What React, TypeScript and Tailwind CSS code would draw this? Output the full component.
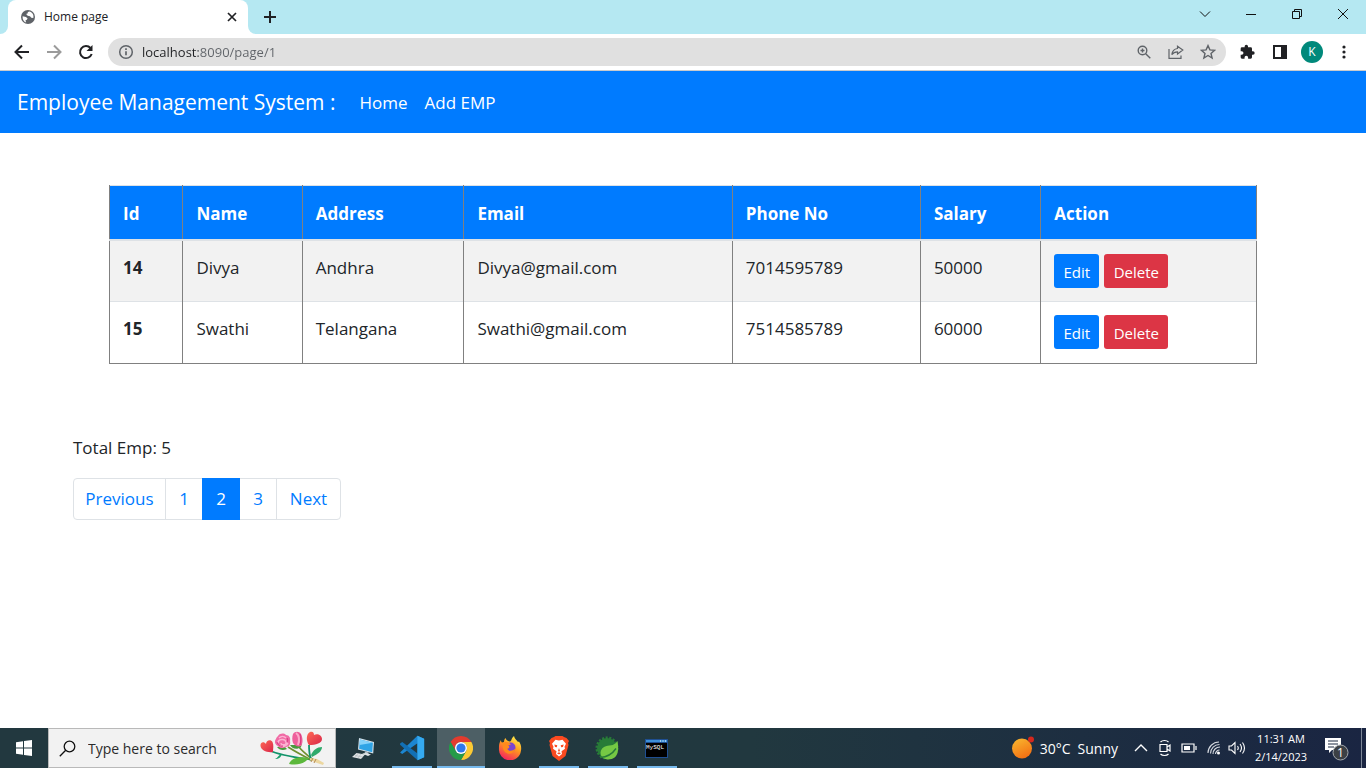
import React, { useState } from "react";

const FONT = "font-['Open_Sans','Noto_Sans',sans-serif]";

const employees = [
  { id: 14, name: "Divya", address: "Andhra", email: "Divya@gmail.com", phone: "7014595789", salary: "50000" },
  { id: 15, name: "Swathi", address: "Telangana", email: "Swathi@gmail.com", phone: "7514585789", salary: "60000" },
];

const columns = [
  { label: "Id", width: "w-[6.4%]" },
  { label: "Name", width: "w-[10.4%]" },
  { label: "Address", width: "w-[14.1%]" },
  { label: "Email", width: "w-[23.4%]" },
  { label: "Phone No", width: "w-[16.4%]" },
  { label: "Salary", width: "w-[10.5%]" },
  { label: "Action", width: "w-[18.8%]" },
];

function IconButton({ label, className = "", children }: { label: string; className?: string; children: React.ReactNode }) {
  return (
    <button type="button" aria-label={label} className={`flex shrink-0 items-center justify-center ${className}`}>
      {children}
    </button>
  );
}

function GlobeIcon() {
  return (
    <svg width="16" height="16" viewBox="0 0 16 16">
      <circle cx="8" cy="8" r="7" fill="#5f6368" />
      <path d="M2.6 7.2 6 8l1.6 1.4-.8 1.4-1.3.5.6 2.2C3.8 12.8 2.3 10.5 2.6 7.2Z" fill="#fff" />
      <path d="M7.5 3.2 9.2 2.5c1.600.3 2.600 1 3.500 2.300.8 1.300.9 2.900.6 4.100l-2-.2-1.300-1.500-2.200-.4-1.300-1 .2-1.300 1.500-.2Z" fill="#fff" />
    </svg>
  );
}

function TabStrip() {
  return (
    <div className="flex h-[34px] items-stretch justify-between bg-[#b5e8f2]">
      <div className="flex items-stretch">
        <div className="flex w-2 bg-white">
          <div className="flex-1 rounded-br-lg bg-[#b5e8f2]" />
        </div>
        <div className="flex bg-[#b5e8f2]">
          <div className="flex w-[240px] items-center rounded-t-lg bg-white pr-2 pl-3">
            <GlobeIcon />
            <span className="ml-2 flex-1 text-[12px] text-[#202124]">Home page</span>
            <IconButton label="Close tab" className="size-4">
              <svg width="10" height="10" viewBox="0 0 10 10" stroke="#202124" strokeWidth="1.7">
                <path d="m1 1 8 8M9 1 1 9" />
              </svg>
            </IconButton>
          </div>
        </div>
        <div className="flex w-2 bg-white">
          <div className="flex-1 rounded-bl-lg bg-[#b5e8f2]" />
        </div>
        <IconButton label="New tab" className="w-7">
          <svg width="12" height="12" viewBox="0 0 12 12" stroke="#202124" strokeWidth="2">
            <path d="M6 0v12M0 6h12" />
          </svg>
        </IconButton>
      </div>
      <div className="flex h-7 text-[#111]">
        <IconButton label="Search tabs" className="w-[46px]">
          <svg width="12" height="12" viewBox="0 0 12 12" fill="none" stroke="currentColor">
            <path d="m1 3.500 5 5 5-5" />
          </svg>
        </IconButton>
        <IconButton label="Minimize" className="w-[46px]">
          <svg width="12" height="12" viewBox="0 0 12 12" fill="none" stroke="currentColor">
            <path d="M1 6.500h10" />
          </svg>
        </IconButton>
        <IconButton label="Restore" className="w-[46px]">
          <svg width="12" height="12" viewBox="0 0 12 12" fill="none" stroke="currentColor">
            <path d="M1.500 3.500h7v7h-7zM3.500 3.500v-2h7v7h-2" />
          </svg>
        </IconButton>
        <IconButton label="Close" className="w-[46px]">
          <svg width="12" height="12" viewBox="0 0 12 12" fill="none" stroke="currentColor">
            <path d="m1 1 10 10M11 1 1 11" />
          </svg>
        </IconButton>
      </div>
    </div>
  );
}

function Toolbar() {
  return (
    <div className="flex h-[37px] items-center border-b border-[#c9cbce] bg-white px-1.5">
      <IconButton label="Back" className="size-8">
        <svg width="16" height="16" viewBox="0 0 16 16" fill="none" stroke="#202124" strokeWidth="2">
          <path d="M15 8H2M8 1.500 1.500 8 8 14.500" />
        </svg>
      </IconButton>
      <IconButton label="Forward" className="size-8">
        <svg width="16" height="16" viewBox="0 0 16 16" fill="none" stroke="#9b9b9b" strokeWidth="2">
          <path d="M1 8h13M8 1.500 14.500 8 8 14.500" />
        </svg>
      </IconButton>
      <IconButton label="Reload" className="size-8">
        <svg width="16" height="16" viewBox="0 0 16 16" fill="none" stroke="#202124" strokeWidth="2">
          <path d="M13.700 10A6 6 0 1 1 12.500 4" />
          <path d="M14.500 1v6h-6z" fill="#202124" stroke="none" />
        </svg>
      </IconButton>
      <div className="ml-1.5 flex h-7 flex-1 items-center rounded-full bg-[#e0e0e0] pr-[2px] pl-[10px]">
        <svg width="16" height="16" viewBox="0 0 16 16" fill="none" stroke="#5f6368" strokeWidth="1.500">
          <circle cx="8" cy="8" r="6.300" />
          <path d="M8 7.200v4M8 4.300v1.600" strokeWidth="1.700" />
        </svg>
        <input
          aria-label="Address bar"
          defaultValue="localhost:8090/page/1"
          className="ml-2 h-7 min-w-0 flex-1 bg-[linear-gradient(90deg,#202124_56px,#5f6368_56px)] bg-clip-text text-[13px] text-transparent outline-none"
        />
        <IconButton label="Zoom" className="size-8">
          <svg width="14" height="14" viewBox="0 0 14 14" fill="none" stroke="#5f6368" strokeWidth="1.400">
            <circle cx="5.500" cy="5.500" r="4.300" />
            <path d="m8.700 8.700 4.600 4.600M5.500 3.500v4M3.500 5.500h4" />
          </svg>
        </IconButton>
        <IconButton label="Share" className="size-8">
          <svg width="16" height="14" viewBox="0 0 16 14" fill="none" stroke="#5f6368" strokeWidth="1.200">
            <path d="M1 4v9.300h12V10.500" />
            <path d="M9.500 1.200 14.800 5 9.500 9V6.800C7 6.800 5.200 7.600 3.800 9.600 4.200 6.500 6 4 9.500 3.500Z" />
          </svg>
        </IconButton>
        <IconButton label="Bookmark" className="size-8">
          <svg width="16" height="16" viewBox="0 0 16 16" fill="none" stroke="#5f6368" strokeWidth="1.400">
            <path d="m8 1.600 1.900 4.300 4.700.4-3.600 3.100 1.100 4.600L8 11.500 3.900 14 5 9.400 1.400 6.300l4.700-.4Z" />
          </svg>
        </IconButton>
      </div>
      <IconButton label="Extensions" className="ml-1.5 size-8">
        <svg width="16" height="16" viewBox="1 0 24 24" fill="#202124">
          <path d="M20.500 11H19V7a2 2 0 0 0-2-2h-4V3.500a2.500 2.500 0 0 0-5 0V5H4a2 2 0 0 0-2 2v3.800h1.500a2.700 2.700 0 0 1 0 5.400H2V20a2 2 0 0 0 2 2h3.800v-1.500a2.700 2.700 0 0 1 5.400 0V22H17a2 2 0 0 0 2-2v-4h1.500a2.500 2.500 0 0 0 0-5Z" />
        </svg>
      </IconButton>
      <IconButton label="Side panel" className="size-8">
        <svg width="14" height="14" viewBox="0 0 14 14" fill="#202124">
          <path d="M0 0h14v14H0zM2 2v10h6V2z" fillRule="evenodd" />
        </svg>
      </IconButton>
      <IconButton label="Profile" className="size-8">
        <span className="flex size-[22px] items-center justify-center rounded-full bg-[#00897b] text-[12px] text-white">K</span>
      </IconButton>
      <IconButton label="Menu" className="size-8">
        <svg width="4" height="14" viewBox="0 0 4 14" fill="#202124">
          <circle cx="2" cy="2" r="1.600" />
          <circle cx="2" cy="7" r="1.600" />
          <circle cx="2" cy="12" r="1.600" />
        </svg>
      </IconButton>
    </div>
  );
}

function Navbar() {
  return (
    <nav className="flex h-[62px] items-center bg-[#007bff] px-[17px] pt-0.5 text-white">
      <a href="#home" className="text-[21px]">Employee Management System :</a>
      <div className="ml-6 flex gap-[17px] text-[17px]">
        <a href="#home">Home</a>
        <a href="#add">Add EMP</a>
      </div>
    </nav>
  );
}

function EmployeeTable() {
  const cell = "border-x border-x-[#808080] px-[13px] pt-[14px]";
  return (
    <table className="w-full table-fixed border-collapse border border-[#808080] text-left text-[17px] leading-[26px]">
      <thead>
        <tr className="h-[54px] border-t border-b-2 border-[#dee2e6] bg-[#007bff] text-white">
          {columns.map((c) => (
            <th key={c.label} scope="col" className={`border-x border-x-[#808080] px-[13px] pt-1 font-bold ${c.width}`}>
              {c.label}
            </th>
          ))}
        </tr>
      </thead>
      <tbody className="align-top">
        {employees.map((e) => (
          <tr key={e.id} className="h-[62px] border-b border-b-[#dee2e6] odd:bg-[#f2f2f2] last:border-b-[#808080]">
            <th scope="row" className={`${cell} font-bold`}>{e.id}</th>
            <td className={cell}>{e.name}</td>
            <td className={cell}>{e.address}</td>
            <td className={cell}>{e.email}</td>
            <td className={cell}>{e.phone}</td>
            <td className={cell}>{e.salary}</td>
            <td className="border-x border-x-[#808080] px-[13px] pt-[13px]">
              <div className="flex gap-[5px] text-[15px] text-white">
                <button type="button" className="flex h-[34px] w-[45px] items-center justify-center rounded-[3px] bg-[#007bff] pt-0.5">Edit</button>
                <button type="button" className="flex h-[34px] w-16 items-center justify-center rounded-[3px] bg-[#dc3545] pt-0.5">Delete</button>
              </div>
            </td>
          </tr>
        ))}
      </tbody>
    </table>
  );
}

function Pagination() {
  const [page, setPage] = useState(2);
  const item = "flex h-[42px] items-center justify-center border text-[17px]";
  const idle = "border-[#dee2e6] text-[#007bff]";
  return (
    <nav aria-label="Pages" className="flex">
      <a href="#previous" className={`${item} ${idle} w-[93px] rounded-l`}>Previous</a>
      {[1, 2, 3].map((n) => (
        <a
          key={n}
          href={`#${n}`}
          onClick={() => setPage(n)}
          className={`${item} -ml-px w-[38px] ${n === page ? "z-10 border-[#007bff] bg-[#007bff] text-white" : idle}`}
        >
          {n}
        </a>
      ))}
      <a href="#next" className={`${item} ${idle} -ml-px w-[65px] rounded-r`}>Next</a>
    </nav>
  );
}

function Bouquet() {
  return (
    <svg width="66" height="36" viewBox="0 0 66 36" fill="none">
      <defs>
        <linearGradient id="heart" x1="0" y1="0" x2="1" y2="1">
          <stop stopColor="#ff6a55" />
          <stop offset="1" stopColor="#d9264a" />
        </linearGradient>
      </defs>
      <path d="M12 21.500C24 26 38 28 54 30" stroke="#12936a" strokeWidth="1.800" />
      <path d="M28 17c6 4 14 8 23 13M39 17c3 4 8 8 13 12" stroke="#6f8f2f" strokeWidth="1.600" />
      <path d="M49 15c0 5 0 9 2 14" stroke="#12936a" strokeWidth="1.800" />
      <path d="M29 34c2-5 8-8 20-6-3 4-9 8-20 6Z" fill="#5cb83c" />
      <path d="M51 25c2-5 6-8 11-8 0 4-4 7-10 10Z" fill="#2faa6c" />
      <path d="M15 29c3-1 3-4 7-5-1 3-3 5-7 5Z" fill="#19a06c" />
      <path d="M17 17c2 3 6 4 10 2l-3-3ZM30 15c2 4 7 5 11 2l1-4-6 2Z" fill="#4a9a3e" />
      <path d="m50 28 7 1 7 4-1 2-6-2-7-3Z" fill="#ecd7a0" />
      <path d="m53 28-2 4M56 29l-2 4" stroke="#b48a50" />
      <path d="M18 6c2-3 6-3 8-1 3 0 5 3 4 6 1 3-1 6-4 6-3 2-7 1-8-1-3-1-4-5-2-7 0-1 1-2 2-3Z" fill="#f06ba5" />
      <path d="M19 8c2-2 5-2 7 0M18 13c0-4 7-5 8-1 1 3-5 4-5 1M20 16c3 1 6 0 8-3" stroke="#fcb3d2" strokeWidth="1.400" />
      <path d="M17 12c1 3 3 5 6 4M27 8c1 1 1 3 0 4" stroke="#d63a80" />
      <path d="M33 4c2-3 6-3 8 0 2 4 2 9 0 12-3 1-6 0-8-3-1-3-1-6 0-9Z" fill="#ee5f9b" />
      <path d="M36 3c3 2 4 7 2 12" stroke="#fca9ca" strokeWidth="2" />
      <path d="M40 4c1 3 1 7 0 11" stroke="#d73a7c" />
      <path d="M13 22C7 23 1 20 .5 16 0 12 4 11 6 14c0-4 5-5 6.500-2 1.500 3 .5 7 .5 10Z" fill="url(#heart)" />
      <path d="M49 15c-3-4-3-11 1-13 3-1 4 1 4 3 3-2 8 0 8 4 0 4-6 6-13 6Z" fill="url(#heart)" />
    </svg>
  );
}

function ComputerIcon() {
  return (
    <svg width="24" height="24" viewBox="0 0 24 24">
      <path d="m8 2 15 4-.8 11.500L7 13.500Z" fill="#d5e2ea" />
      <path d="m9 3.400 12.900 3.400-.7 9.400L8.100 12.800Z" fill="#2fa4e6" />
      <path d="m9 3.400 12.900 3.400L8.500 9Z" fill="#85d2fa" />
      <path d="m14 15.500 3.500 1v2l-4-1Z" fill="#b7c2c8" />
      <path d="m11 17.500 4-.5 5 1.500-3 1.500ZM5.500 17l8.500 1.500-4 4.500L1 21Z" fill="#dfe3e5" />
      <path d="m4 19.500 8 1.500M7 17.500 4 21.500M10 18l-3 4" stroke="#aeb6ba" strokeWidth=".6" />
    </svg>
  );
}

function CodeIcon() {
  return (
    <svg width="26" height="26" viewBox="0 0 24 24">
      <path d="M17 .8 23.200 3.500v17L17 23.200 17 7.500 3 17.500 1 16.200Z" fill="#1c86d1" />
      <path d="M1 7.800 3 6.500 17.200 17v6.200L1 9Z" fill="#1270b5" />
      <path d="M17 .8 23.200 3.500v17L17 23.200z" fill="#35aaf0" />
    </svg>
  );
}

function ChromeIcon() {
  return (
    <svg width="24" height="24" viewBox="0 0 24 24">
      <path d="M12 0a12 12 0 0 1 10.400 6H12a6 6 0 0 0-5.200 9L1.600 6A12 12 0 0 1 12 0Z" fill="#e33b2e" />
      <path d="M22.400 6a12 12 0 0 1-10.400 18l5.200-9A6 6 0 0 0 12 6Z" fill="#fcc934" />
      <path d="M12 24A12 12 0 0 1 1.600 6l5.200 9a6 6 0 0 0 10.400 0Z" fill="#249b48" />
      <circle cx="12" cy="12" r="6" fill="#fff" />
      <circle cx="12" cy="12" r="4.600" fill="#2f78ec" />
    </svg>
  );
}

function FirefoxIcon() {
  return (
    <svg width="24" height="24" viewBox="0 0 24 24">
      <defs>
        <linearGradient id="fire" x1=".8" y1="0" x2=".3" y2="1">
          <stop stopColor="#fff44f" />
          <stop offset=".45" stopColor="#ff9a1f" />
          <stop offset="1" stopColor="#f5205f" />
        </linearGradient>
      </defs>
      <path d="M3 4c0 1 .2 2 1 2.500L6 6c0-2 .5-3 1.500-4 .5 2 2 3 4 3.500 1 0 1.500-.5 2-2C14 2 15 1 16 0c.5 3 3 4 4 6l1-.5c2 3 2.500 5.500 2 9A11 11 0 0 1 1 12C.8 9 1.500 6 3 4Z" fill="url(#fire)" />
      <circle cx="12.500" cy="11.500" r="5" fill="#7a44cf" />
      <path d="M5 7c3-2 6-1 8 1.500l-3 1c2 .5 1.500 3-.5 3 0 3 5 3 8 0-1 4-4.500 6-8 5C5 16 4 11 5 7Z" fill="#ff8a1d" />
    </svg>
  );
}

function BraveIcon() {
  return (
    <svg width="22" height="25" viewBox="0 0 22 25">
      <path d="m6 1 1.500-1h7L16 1l2.500 1L21 5l-1 2 .5 2-3 11L11 25l-6.500-5-3-11L2 7 1 5l2.500-3Z" fill="#fb4a20" />
      <path d="m11 4.500 3.500-.7 3.500 4-1.500 3 .5 2-3.500 2.500.5 2.700-3 2.500-3-2.500.5-2.700L5 12.800l.5-2-1.500-3 3.500-4Z" fill="#fff" />
      <path d="m6.300 8.500 3 .8-.5 2-1.800-.3ZM15.700 8.500l-3 .8.500 2 1.800-.3ZM11 12l1 3-1 .8-1-.8ZM9 17.200l2-.9 2 .9-2 1.400Z" fill="#fb4a20" />
    </svg>
  );
}

function SpringIcon() {
  return (
    <svg width="25" height="25" viewBox="0 0 25 25">
      <circle cx="12" cy="12" r="10" fill="#287c38" stroke="#287c38" strokeWidth="3" strokeDasharray="2 1.500" />
      <path d="M22.500 5c1 6 2.500 18.500-9.500 18.500-8 0-10-9-4-12.500 5-2.500 9.500 0 13.500-6Z" fill="#75c944" />
      <path d="M5 21.500c7-.5 12-3 16-9" stroke="#287c38" strokeWidth="1.400" fill="none" />
    </svg>
  );
}

function MySqlIcon() {
  return (
    <svg width="23" height="19" viewBox="0 0 23 19">
      <path d="M0 0h23v19H0z" fill="#1f4f92" />
      <path d="M1 4h21v14H1z" fill="#000" />
      <path d="M1 1h21v2H1z" fill="#3d8fd8" />
      <path d="M15 2h1M17.500 2h1M20 2h1" stroke="#fff" />
      <text x="1" y="10" fontSize="6" fill="#fff" fontFamily="Liberation Mono, monospace">MySQL</text>
    </svg>
  );
}

const apps = [
  { name: "This PC", icon: <ComputerIcon />, state: "border-transparent w-12" },
  { name: "Visual Studio Code", icon: <CodeIcon />, state: "border-[#76b9ed] w-10" },
  { name: "Google Chrome", icon: <ChromeIcon />, state: "border-[#76b9ed] w-12 bg-[#4d5f65]" },
  { name: "Firefox", icon: <FirefoxIcon />, state: "border-transparent w-10" },
  { name: "Brave", icon: <BraveIcon />, state: "border-[#76b9ed] w-10" },
  { name: "Spring Tool Suite", icon: <SpringIcon />, state: "border-[#76b9ed] w-10" },
  { name: "MySQL", icon: <MySqlIcon />, state: "border-[#76b9ed] w-10" },
];

function Taskbar() {
  return (
    <footer className="flex h-10 shrink-0 items-stretch bg-linear-to-r from-[#22383f] via-[#21383f] via-55% to-[#1a2542] text-white">
      <IconButton label="Start" className="w-12">
        <svg width="16" height="16" viewBox="0 0 16 16" fill="#fff">
          <path d="M0 2.200 7 1.200v6.300H0ZM8 1l8-1v7.500H8ZM0 8.500h7v6.300l-7-1ZM8 8.500h8V16l-8-1Z" />
        </svg>
      </IconButton>
      <div className="flex w-[288px] items-center border border-[#b9b9b9] bg-[#f2f2f2] pr-[9px] pl-[10px]">
        <svg width="17" height="17" viewBox="0 0 17 17" fill="none" stroke="#111" strokeWidth="1.300">
          <circle cx="10.500" cy="6.500" r="5.300" />
          <path d="M6.700 10.300.8 16.200" />
        </svg>
        <input
          aria-label="Search"
          placeholder="Type here to search"
          className="ml-3 min-w-0 flex-1 bg-transparent text-[14px] outline-none placeholder:text-[#2b2b2b] placeholder:opacity-100"
        />
        <Bouquet />
      </div>
      <div className="ml-[2px] flex">
        {apps.map((a) => (
          <div key={a.name} className="flex w-[49px] justify-center">
            <IconButton label={a.name} className={`border-b-2 pt-0.5 ${a.state}`}>{a.icon}</IconButton>
          </div>
        ))}
      </div>
      <div className="ml-auto flex items-center">
        <button type="button" className="flex items-center text-[14px]">
          <svg width="24" height="24" viewBox="0 0 24 24">
            <defs>
              <linearGradient id="sun" x1=".2" y1="0" x2=".7" y2="1">
                <stop stopColor="#f9b52e" />
                <stop offset="1" stopColor="#f36d12" />
              </linearGradient>
            </defs>
            <circle cx="11" cy="12.500" r="10" fill="url(#sun)" />
            <circle cx="20" cy="3.500" r="3" fill="#d5281d" />
          </svg>
          <span className="ml-[5px]">30°C</span>
          <span className="ml-[7px]">Sunny</span>
        </button>
        <IconButton label="Show hidden icons" className="ml-4">
          <svg width="14" height="14" viewBox="0 0 14 14" fill="none" stroke="#fff" strokeWidth="1.400">
            <path d="m1 10 6-6 6 6" />
          </svg>
        </IconButton>
        <IconButton label="Meet now" className="ml-[10px]">
          <svg width="14" height="18" viewBox="0 0 14 18" fill="none" stroke="#fff" strokeWidth="1.200">
            <path d="M2 5.500h7v7H2zM9 8l3-2v6L9 10M2.500 3c2-2 6-2 8 0M2.500 15c2 2 6 2 8 0" />
          </svg>
        </IconButton>
        <IconButton label="Battery" className="ml-[9px]">
          <svg width="16" height="10" viewBox="0 0 16 10" fill="none" stroke="#fff" strokeWidth="1.200">
            <path d="M1 1h12v8H1zM15 3v4" />
            <path d="M3 3h6v4H3z" fill="#fff" stroke="none" />
          </svg>
        </IconButton>
        <IconButton label="Network" className="ml-[10px]">
          <svg width="14" height="14" viewBox="0 0 14 14" fill="none" stroke="#d5d9e0" strokeWidth="1.100">
            <path d="M1 12C1 6 6 1 12 1M3.500 12.500c0-5 4-9 9-9M6 13c0-4 3-7 7-7M8.500 13c0-2 2-4 4-4" />
            <circle cx="11.500" cy="12" r="1.500" fill="#fff" stroke="none" />
          </svg>
        </IconButton>
        <IconButton label="Volume" className="ml-[7px]">
          <svg width="18" height="14" viewBox="0 0 18 14" fill="none" stroke="#fff" strokeWidth="1.100">
            <path d="M1 5h2.500l3.500-3.500v11L3.500 9H1ZM9.500 5q1.500 2 0 4M12 3q3 4 0 8M14.500 1.500q4 5.500 0 11" />
          </svg>
        </IconButton>
        <div className="ml-2 w-[54px] text-center text-[11px] leading-[18px] whitespace-nowrap">
          <div>11:31 AM</div>
          <div>2/14/2023</div>
        </div>
        <IconButton label="Notifications" className="ml-4">
          <svg width="26" height="26" viewBox="0 0 26 26">
            <path d="M1 3h16v12H8l-3 3v-3H1Z" fill="#fff" />
            <path d="M4 6h10M4 9h10M4 12h6" stroke="#1c2a42" strokeWidth="1.200" />
            <circle cx="16.500" cy="17.500" r="7.500" fill="#3c4045" stroke="#a4a9ae" />
            <text x="16.500" y="21.500" textAnchor="middle" fontSize="12" fill="#fff">1</text>
          </svg>
        </IconButton>
        <div className="ml-[11px] h-10 w-[5px] border-l border-[#7d8797]" />
      </div>
    </footer>
  );
}

export default function App() {
  return (
    <div className={`flex min-h-screen flex-col bg-white text-[#212529] ${FONT}`}>
      <header>
        <TabStrip />
        <Toolbar />
      </header>
      <Navbar />
      <main className="flex-1 px-[73px] pt-[52px]">
        <div className="px-9">
          <EmployeeTable />
        </div>
        <p className="mt-[71px] mb-[17px] text-[17px] leading-[26px]">Total Emp: 5</p>
        <Pagination />
      </main>
      <Taskbar />
    </div>
  );
}
